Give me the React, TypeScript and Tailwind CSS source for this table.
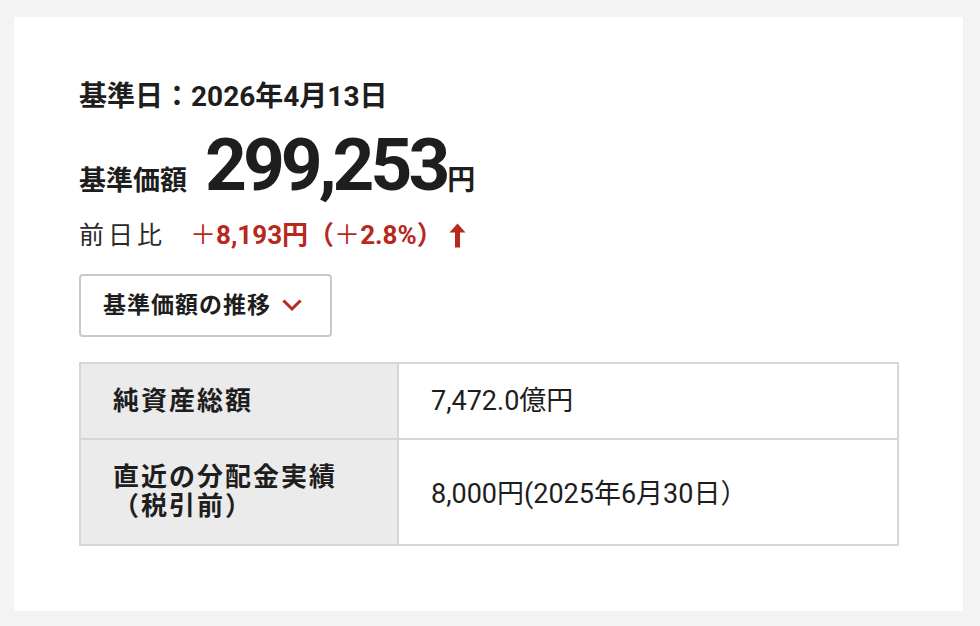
import React from 'react';

const font = "font-['Roboto','Noto_Sans_CJK_JP',sans-serif]";

const ChevronDown: React.FC = () => (
  <svg width="20" height="13" viewBox="0 0 20 13" fill="none">
    <path d="M2.5 2.5 L10 10 L17.5 2.5" stroke="#b7281e" strokeWidth="3" strokeLinecap="square" />
  </svg>
);

const ArrowUp: React.FC = () => (
  <svg width="17" height="25" viewBox="0 0 17 25">
    <path d="M8.5 0.5 L16.5 9.5 L11 9.5 L11 24.5 L6 24.5 L6 9.5 L0.5 9.5 Z" fill="#b7281e" />
  </svg>
);

export default function App() {
  return (
    <div className={`min-h-[626px] bg-[#f3f3f3] pt-[17px] pl-[14px] pr-[17px] pb-[15px] ${font} text-[#1e1e1e]`}>
      <div className="bg-white h-[594px] pl-[65px] pr-[65px] pt-[62px]">
        <div className="h-[35px] flex items-center text-[28px] font-bold leading-none">基準日：2026年4月13日</div>

        <div className="flex items-baseline mt-[15px] h-[58px]">
          <span className="text-[27px] font-bold leading-none">基準価額</span>
          <span className="text-[73px] font-bold leading-none ml-[18px] tracking-[-4px]">299,253</span>
          <span className="text-[28px] font-bold leading-none ml-[1px]">円</span>
        </div>

        <div className="flex items-center h-[30px] mt-[33px] leading-none">
          <span className="text-[25px] tracking-[4px] text-[#2a2a2a]">前日比</span>
          <span className="ml-[24px] text-[26px] text-[#b7281e] flex items-center">
            <span className="font-normal">＋</span>
            <span className="font-bold">8,193円（</span>
            <span className="font-normal">＋</span>
            <span className="font-bold">2.8%）</span>
          </span>
          <span className="ml-[6px]"><ArrowUp /></span>
        </div>

        <button className="mt-[24px] w-[253px] h-[63px] border-2 border-[#c8c8c8] rounded-[4px] flex items-center pl-[22px] gap-[11px] bg-white">
          <span className="text-[23px] font-bold leading-none tracking-[1px]">基準価額の推移</span>
          <ChevronDown />
        </button>

        <div className="mt-[25px] border-2 border-[#d6d6d6] w-[820px]">
          <div className="flex h-[76px] border-b-2 border-[#d6d6d6]">
            <div className="w-[318px] bg-[#ebebeb] border-r-2 border-[#d6d6d6] flex items-center pl-[32px] text-[26px] font-bold tracking-[2px]">純資産総額</div>
            <div className="flex-1 flex items-center pl-[32px] text-[27px]">7,472.0億円</div>
          </div>
          <div className="flex h-[104px]">
            <div className="w-[318px] bg-[#ebebeb] border-r-2 border-[#d6d6d6] flex flex-col justify-center pl-[32px] text-[26px] font-bold leading-[29px] tracking-[2px]">
              <span>直近の分配金実績</span>
              <span>（税引前）</span>
            </div>
            <div className="flex-1 flex items-center pl-[32px] text-[27px] pt-[4px]">8,000円(2025年6月30日）</div>
          </div>
        </div>
      </div>
    </div>
  );
}
